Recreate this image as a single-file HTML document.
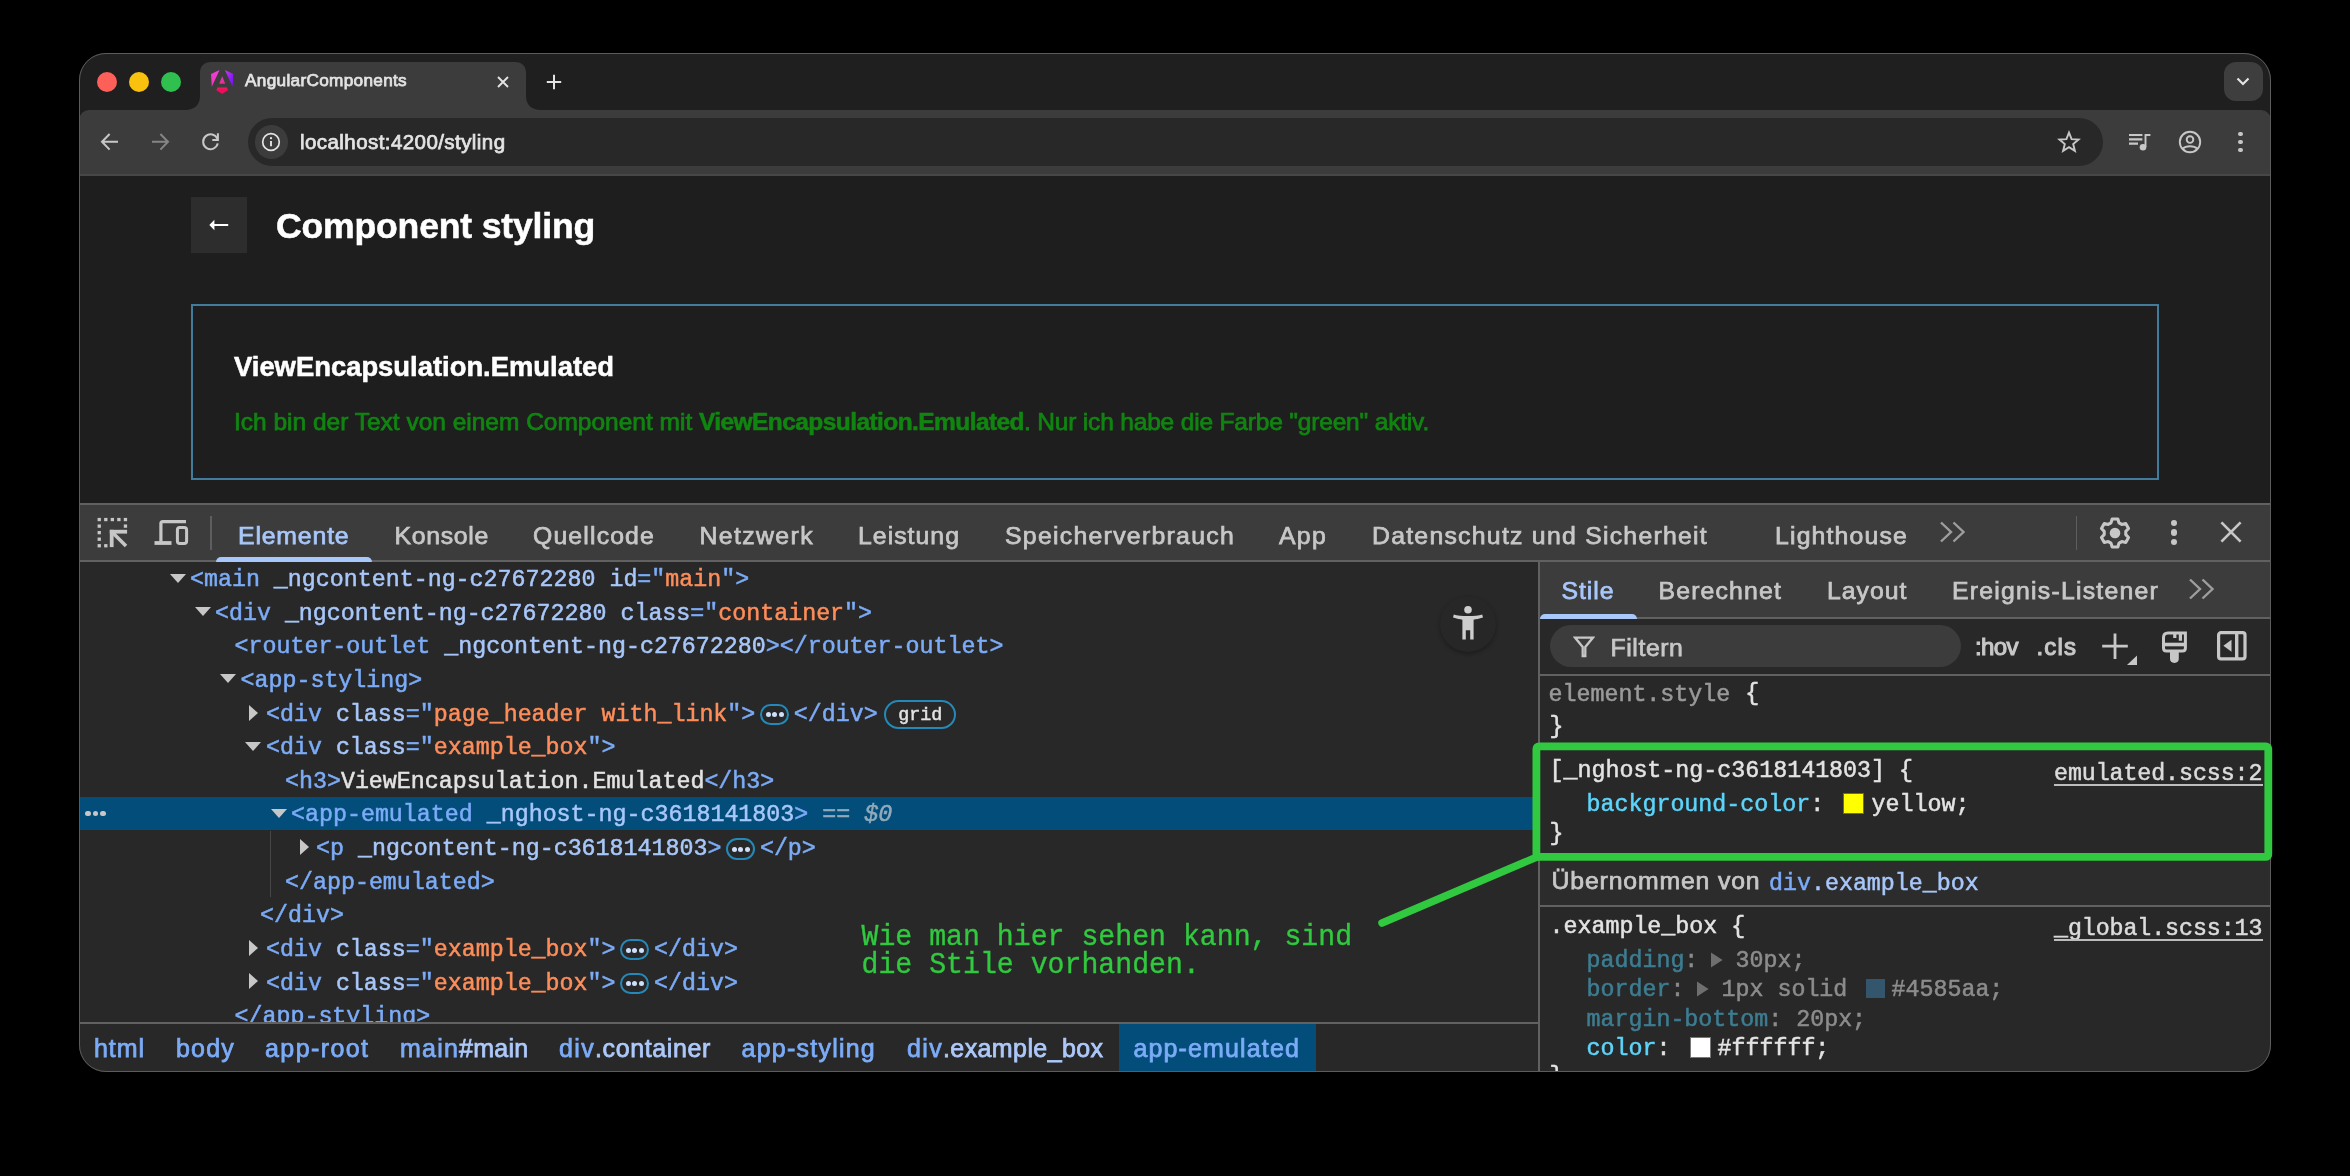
<!DOCTYPE html>
<html><head><meta charset="utf-8"><title>AngularComponents</title>
<style>
html,body{margin:0;padding:0;background:#000;}
body{width:2350px;height:1176px;overflow:hidden;position:relative;font-family:"Liberation Sans",sans-serif;}
#win{position:absolute;left:79px;top:53px;width:2192px;height:1019px;border-radius:27px;overflow:hidden;background:#1e1e1e;}
#c{position:absolute;left:-79px;top:-53px;width:2350px;height:1176px;will-change:transform;}
#c div,#c svg,#c span{position:absolute;}
.t{white-space:pre;line-height:1;}
.m{-webkit-text-stroke:0.5px currentColor;}
.u{-webkit-text-stroke:0.75px currentColor;}
.b{-webkit-text-stroke:0.55px currentColor;}
#rim{position:absolute;left:79px;top:53px;width:2190px;height:1017px;border-radius:27px;border:1px solid #5c5c5c;pointer-events:none;}
#ov{position:absolute;left:0;top:0;}
</style></head><body>
<div id="win"><div id="c">
<div style="left:79px;top:53px;width:2192px;height:57px;background:#1f1f1f;"></div>
<div style="left:79px;top:110px;width:2192px;height:64px;background:#3c3c3c;border-radius:10px 10px 0 0;"></div>
<div style="left:79px;top:174px;width:2192px;height:2px;background:#474747;"></div>
<div style="left:97px;top:72px;width:20px;height:20px;background:#fd5f59;border-radius:50%;"></div>
<div style="left:129.2px;top:72px;width:20px;height:20px;background:#f9c20f;border-radius:50%;"></div>
<div style="left:161.3px;top:72px;width:20px;height:20px;background:#2fc050;border-radius:50%;"></div>
<svg style="left:185px;top:62px" width="356" height="48" viewBox="0 0 356 48"><path d="M0 48 C9 48 15 43 15 34 L15 11 C15 4 19 0 26 0 L330 0 C337 0 341 4 341 11 L341 34 C341 43 347 48 356 48 Z" fill="#3c3c3c"/></svg>
<svg style="left:210.9px;top:69.8px" width="22.5" height="23.8" viewBox="0 0 223 236"><defs><linearGradient id="ag1" x1="0" y1="0" x2="0" y2="1"><stop offset="0" stop-color="#f838dc"/><stop offset="1" stop-color="#e43fb4"/></linearGradient><linearGradient id="ag2" x1="0" y1="0" x2="1" y2="1"><stop offset="0" stop-color="#c93cf0"/><stop offset=".6" stop-color="#8d1cf4"/><stop offset="1" stop-color="#6f12f6"/></linearGradient><linearGradient id="ag3" x1="0" y1="0" x2="0" y2="1"><stop offset="0" stop-color="#d440c4"/><stop offset="1" stop-color="#ea2c86"/></linearGradient><linearGradient id="ag4" x1="0" y1="0" x2="0" y2="1"><stop offset="0" stop-color="#e8206c"/><stop offset=".5" stop-color="#f60657"/><stop offset="1" stop-color="#ee1560"/></linearGradient></defs><path d="M7.937 165.115 0 39.192 84.69 0 7.937 165.115Z" fill="url(#ag1)"/><path d="m222.077 39.192-8.019 125.923L137.387 0l84.69 39.192Z" fill="url(#ag2)"/><path d="M111.039 62.675l30.357 73.803H80.681l30.358-73.803Z" fill="url(#ag3)"/><path d="M168.972 202.017l-57.933 33.056-57.934-33.056 11.783-28.556h92.301l11.783 28.556Z" fill="url(#ag4)"/></svg>
<span class="t u" style="left:245px;top:72.44px;font-size:17.2px;color:#e3e3e3;letter-spacing:0.312px;">AngularComponents</span>
<svg style="left:496.2px;top:74.5px" width="14" height="14" viewBox="0 0 14 14"><path d="M2 2 L12 12 M12 2 L2 12" stroke="#e3e3e3" stroke-width="1.9" fill="none"/></svg>
<svg style="left:546px;top:73.5px" width="16" height="16" viewBox="0 0 16 16"><path d="M8 0.8 V15.2 M0.8 8 H15.2" stroke="#e3e3e3" stroke-width="2" fill="none"/></svg>
<div style="left:2224px;top:62px;width:39px;height:39px;background:#3e3e3e;border-radius:12px;"></div>
<svg style="left:2236px;top:77.2px" width="14" height="10" viewBox="0 0 14 10"><path d="M1.5 1.5 L7 7 L12.5 1.5" stroke="#e3e3e3" stroke-width="2.2" fill="none"/></svg>
<svg style="left:99px;top:131px" width="22" height="22" viewBox="0 0 22 22"><path d="M19 10.8 H3.8 M10.6 3 L3 10.8 L10.6 18.6" stroke="#c7c7c7" stroke-width="2" fill="none"/></svg>
<svg style="left:149px;top:131px" width="22" height="22" viewBox="0 0 22 22"><path d="M3 10.8 H18.2 M11.4 3 L19 10.8 L11.4 18.6" stroke="#858585" stroke-width="2" fill="none"/></svg>
<svg style="left:200px;top:131px" width="22" height="22" viewBox="0 0 22 22"><path d="M17.4 8.0 A7.4 7.4 0 1 0 17.75 12.4" stroke="#c7c7c7" stroke-width="2" fill="none"/><path d="M17.9 2.2 V8.9 H12.3" stroke="#c7c7c7" stroke-width="2" fill="none"/></svg>
<div style="left:247.8px;top:118px;width:1854.8px;height:47.7px;background:#282828;border-radius:24px;"></div>
<div style="left:254.6px;top:125px;width:33.6px;height:33.6px;background:#3c3c3c;border-radius:50%;"></div>
<svg style="left:261.4px;top:131.8px" width="20" height="20" viewBox="0 0 20 20"><circle cx="10" cy="10" r="8.3" stroke="#e3e3e3" stroke-width="1.7" fill="none"/><path d="M10 9 V14.2" stroke="#e3e3e3" stroke-width="1.9"/><circle cx="10" cy="6.2" r="1.15" fill="#e3e3e3"/></svg>
<span class="t u" style="left:300px;top:131.65px;font-size:20.5px;color:#e3e3e3;letter-spacing:0.431px;">localhost:4200/styling</span>
<svg style="left:2057px;top:130px" width="24" height="24" viewBox="0 0 24 24"><path d="M12 2.6 L14.6 9.1 L21.6 9.6 L16.2 14.1 L17.9 20.9 L12 17.2 L6.1 20.9 L7.8 14.1 L2.4 9.6 L9.4 9.1 Z" stroke="#c7c7c7" stroke-width="1.9" fill="none" stroke-linejoin="miter"/></svg>
<svg style="left:2128px;top:131.5px" width="24" height="22" viewBox="0 0 24 22"><path d="M1 3 H14.4 M1 7.3 H14.4 M1 11.6 H10" stroke="#c7c7c7" stroke-width="2.2"/><path d="M16.6 3 H22.4 M17.5 3 V15" stroke="#c7c7c7" stroke-width="1.9" fill="none"/><circle cx="15" cy="15.2" r="3.3" fill="#c7c7c7"/></svg>
<svg style="left:2178px;top:130px" width="24" height="24" viewBox="0 0 24 24"><circle cx="12" cy="12" r="10.2" stroke="#c7c7c7" stroke-width="1.9" fill="none"/><circle cx="12" cy="9.6" r="3.3" stroke="#c7c7c7" stroke-width="1.9" fill="none"/><path d="M4.8 18.6 C8 15.4 16 15.4 19.2 18.6" stroke="#c7c7c7" stroke-width="1.9" fill="none"/></svg>
<div style="left:2238px;top:131.7px;width:4.6px;height:4.6px;background:#c7c7c7;border-radius:50%;"></div>
<div style="left:2238px;top:139.7px;width:4.6px;height:4.6px;background:#c7c7c7;border-radius:50%;"></div>
<div style="left:2238px;top:147.7px;width:4.6px;height:4.6px;background:#c7c7c7;border-radius:50%;"></div>
<div style="left:79px;top:176px;width:2192px;height:328px;background:#1e1e1e;"></div>
<div style="left:191px;top:197px;width:56px;height:56px;background:#2d2d2d;"></div>
<svg style="left:209px;top:219px" width="20" height="12" viewBox="0 0 20 12"><path d="M0.3 6 L5.4 0.8 L5.4 5 L19.2 5 L19.2 7 L5.4 7 L5.4 11.2 Z" fill="#ffffff"/></svg>
<span class="t b" style="left:276px;top:208.86px;font-size:35.6px;color:#ffffff;font-weight:700;letter-spacing:-0.187px;">Component styling</span>
<div style="left:191px;top:304px;width:1964px;height:172px;background:transparent;border:2px solid #427b9c;"></div>
<span class="t b" style="left:234px;top:352.81px;font-size:27.4px;color:#ffffff;font-weight:700;letter-spacing:-0.001px;">ViewEncapsulation.Emulated</span>
<span class="t u" style="left:234px;top:410.26px;font-size:24.5px;color:#108510;letter-spacing:-0.007px;">Ich bin der Text von einem Component mit </span>
<span class="t b" style="left:699px;top:410.26px;font-size:24.5px;color:#108510;font-weight:700;letter-spacing:-0.574px;">ViewEncapsulation.Emulated</span>
<span class="t u" style="left:1024px;top:410.26px;font-size:24.5px;color:#108510;letter-spacing:-0.176px;">. Nur ich habe die Farbe "green" aktiv.</span>
<div style="left:79px;top:503px;width:2192px;height:2px;background:#616161;"></div>
<div style="left:79px;top:505px;width:2192px;height:55px;background:#3c3c3c;"></div>
<div style="left:79px;top:560px;width:2192px;height:2px;background:#616161;"></div>
<div style="left:79px;top:562px;width:1459px;height:460px;background:#282828;"></div>
<svg style="left:97px;top:517px" width="32" height="32" viewBox="0 0 32 32"><g fill="#c7c7c7"><rect x="0.60" y="0.90" width="3.3" height="3.3"/><rect x="7.15" y="0.90" width="3.3" height="3.3"/><rect x="13.70" y="0.90" width="3.3" height="3.3"/><rect x="20.25" y="0.90" width="3.3" height="3.3"/><rect x="26.80" y="0.90" width="3.3" height="3.3"/><rect x="0.60" y="7.45" width="3.3" height="3.3"/><rect x="0.60" y="14.00" width="3.3" height="3.3"/><rect x="0.60" y="20.55" width="3.3" height="3.3"/><rect x="0.60" y="27.10" width="3.3" height="3.3"/><rect x="26.80" y="7.45" width="3.3" height="3.3"/><rect x="7.15" y="27.10" width="3.3" height="3.3"/><rect x="12.8" y="12.8" width="17.3" height="3.8"/><rect x="12.8" y="12.8" width="3.8" height="17.3"/></g><path d="M15 15 L29 29" stroke="#c7c7c7" stroke-width="3.5" fill="none"/></svg>
<svg style="left:154px;top:517px" width="36" height="30" viewBox="0 0 36 30"><path d="M6.9 24.6 V6.6 Q6.9 4.6 8.9 4.6 H32" stroke="#c7c7c7" stroke-width="3.2" fill="none"/><path d="M0.5 26 H17.5" stroke="#c7c7c7" stroke-width="3.8" fill="none"/><rect x="23.4" y="10.5" width="9.2" height="16" rx="2.4" stroke="#c7c7c7" stroke-width="3" fill="none"/></svg>
<div style="left:210px;top:516px;width:1.5px;height:34px;background:#5e5e5e;"></div>
<span class="t u" style="left:238px;top:523.81px;font-size:24.8px;color:#a8c7fa;letter-spacing:0.842px;">Elemente</span>
<div style="left:216px;top:557px;width:156px;height:5px;background:#a8c7fa;border-radius:5px 5px 0 0;"></div>
<span class="t u" style="left:394.5px;top:523.81px;font-size:24.8px;color:#c7c7c7;letter-spacing:0.696px;">Konsole</span>
<span class="t u" style="left:533px;top:523.81px;font-size:24.8px;color:#c7c7c7;letter-spacing:1.148px;">Quellcode</span>
<span class="t u" style="left:699.5px;top:523.81px;font-size:24.8px;color:#c7c7c7;letter-spacing:1.395px;">Netzwerk</span>
<span class="t u" style="left:858px;top:523.81px;font-size:24.8px;color:#c7c7c7;letter-spacing:1.029px;">Leistung</span>
<span class="t u" style="left:1005px;top:523.81px;font-size:24.8px;color:#c7c7c7;letter-spacing:1.286px;">Speicherverbrauch</span>
<span class="t u" style="left:1279px;top:523.81px;font-size:24.8px;color:#c7c7c7;letter-spacing:1.292px;">App</span>
<span class="t u" style="left:1372px;top:523.81px;font-size:24.8px;color:#c7c7c7;letter-spacing:1.259px;">Datenschutz und Sicherheit</span>
<span class="t u" style="left:1775px;top:523.81px;font-size:24.8px;color:#c7c7c7;letter-spacing:1.166px;">Lighthouse</span>
<svg style="left:1939px;top:521px" width="28" height="22" viewBox="0 0 28 22"><path d="M2 1.5 L12 11 L2 20.5 M14.5 1.5 L24.5 11 L14.5 20.5" stroke="#9e9e9e" stroke-width="2.4" fill="none"/></svg>
<div style="left:2075.5px;top:516px;width:1.5px;height:34px;background:#5e5e5e;"></div>
<svg style="left:2098.2px;top:515.5px" width="34" height="34" viewBox="0 0 34 34"><path d="M14.17 2.98 L19.83 2.98 L21.01 6.87 L23.77 8.46 L27.73 7.54 L30.55 12.44 L27.78 15.41 L27.78 18.59 L30.55 21.56 L27.73 26.46 L23.77 25.54 L21.01 27.13 L19.83 31.02 L14.17 31.02 L12.99 27.13 L10.23 25.54 L6.27 26.46 L3.45 21.56 L6.22 18.59 L6.22 15.41 L3.45 12.44 L6.27 7.54 L10.23 8.46 L12.99 6.87 Z" stroke="#c7c7c7" stroke-width="3.1" fill="none" stroke-linejoin="round"/><circle cx="17" cy="17" r="5.3" fill="#c7c7c7"/></svg>
<div style="left:2171.1px;top:520.1px;width:6.2px;height:6.2px;background:#c7c7c7;border-radius:50%;"></div>
<div style="left:2171.1px;top:529.4px;width:6.2px;height:6.2px;background:#c7c7c7;border-radius:50%;"></div>
<div style="left:2171.1px;top:538.9px;width:6.2px;height:6.2px;background:#c7c7c7;border-radius:50%;"></div>
<svg style="left:2219.2px;top:520.4px" width="24" height="24" viewBox="0 0 24 24"><path d="M2.4 2.4 L21.6 21.6 M21.6 2.4 L2.4 21.6" stroke="#c7c7c7" stroke-width="2.7" fill="none"/></svg>
<div style="left:79px;top:796.7px;width:1459px;height:33.3px;background:#034d7a;"></div>
<svg style="left:170px;top:573.5px" width="16" height="9" viewBox="0 0 16 9"><path d="M0 0 H16 L8 9 Z" fill="#c7c7c7"/></svg>
<span class="t m" style="left:190px;top:569.13px;font-size:23.3px;color:#7cacf8;font-family:'Liberation Mono',monospace;">&lt;main</span>
<span class="t m" style="left:259.9px;top:569.13px;font-size:23.3px;color:#a8c7fa;font-family:'Liberation Mono',monospace;"> _ngcontent-ng-c27672280 id</span>
<span class="t m" style="left:637.36px;top:569.13px;font-size:23.3px;color:#7cacf8;font-family:'Liberation Mono',monospace;">="</span>
<span class="t m" style="left:665.32px;top:569.13px;font-size:23.3px;color:#fe8d59;font-family:'Liberation Mono',monospace;">main</span>
<span class="t m" style="left:721.24px;top:569.13px;font-size:23.3px;color:#7cacf8;font-family:'Liberation Mono',monospace;">"&gt;</span>
<svg style="left:195px;top:607.1px" width="16" height="9" viewBox="0 0 16 9"><path d="M0 0 H16 L8 9 Z" fill="#c7c7c7"/></svg>
<span class="t m" style="left:215px;top:602.75px;font-size:23.3px;color:#7cacf8;font-family:'Liberation Mono',monospace;">&lt;div</span>
<span class="t m" style="left:270.92px;top:602.75px;font-size:23.3px;color:#a8c7fa;font-family:'Liberation Mono',monospace;"> _ngcontent-ng-c27672280 class</span>
<span class="t m" style="left:690.32px;top:602.75px;font-size:23.3px;color:#7cacf8;font-family:'Liberation Mono',monospace;">="</span>
<span class="t m" style="left:718.2800000000001px;top:602.75px;font-size:23.3px;color:#fe8d59;font-family:'Liberation Mono',monospace;">container</span>
<span class="t m" style="left:844.1000000000001px;top:602.75px;font-size:23.3px;color:#7cacf8;font-family:'Liberation Mono',monospace;">"&gt;</span>
<span class="t m" style="left:234.5px;top:636.37px;font-size:23.3px;color:#7cacf8;font-family:'Liberation Mono',monospace;">&lt;router-outlet</span>
<span class="t m" style="left:430.22px;top:636.37px;font-size:23.3px;color:#a8c7fa;font-family:'Liberation Mono',monospace;"> _ngcontent-ng-c27672280</span>
<span class="t m" style="left:765.74px;top:636.37px;font-size:23.3px;color:#7cacf8;font-family:'Liberation Mono',monospace;">&gt;&lt;/router-outlet&gt;</span>
<svg style="left:220px;top:674.4px" width="16" height="9" viewBox="0 0 16 9"><path d="M0 0 H16 L8 9 Z" fill="#c7c7c7"/></svg>
<span class="t m" style="left:240.5px;top:669.99px;font-size:23.3px;color:#7cacf8;font-family:'Liberation Mono',monospace;">&lt;app-styling&gt;</span>
<svg style="left:248.5px;top:704.5px" width="9" height="16" viewBox="0 0 9 16"><path d="M0 0 V16 L9 8 Z" fill="#c7c7c7"/></svg>
<span class="t m" style="left:266px;top:703.61px;font-size:23.3px;color:#7cacf8;font-family:'Liberation Mono',monospace;">&lt;div</span>
<span class="t m" style="left:321.92px;top:703.61px;font-size:23.3px;color:#a8c7fa;font-family:'Liberation Mono',monospace;"> class</span>
<span class="t m" style="left:405.8px;top:703.61px;font-size:23.3px;color:#7cacf8;font-family:'Liberation Mono',monospace;">="</span>
<span class="t m" style="left:433.76px;top:703.61px;font-size:23.3px;color:#fe8d59;font-family:'Liberation Mono',monospace;">page_header with_link</span>
<span class="t m" style="left:727.3399999999999px;top:703.61px;font-size:23.3px;color:#7cacf8;font-family:'Liberation Mono',monospace;">"&gt;</span>
<div style="left:759.8px;top:703.9px;width:25.2px;height:17.2px;border:2.2px solid #2489b8;border-radius:11px;"></div>
<div style="left:765.5px;top:712.2px;width:5px;height:5px;border-radius:50%;background:#cfe0fb;"></div>
<div style="left:772.1px;top:712.2px;width:5px;height:5px;border-radius:50%;background:#cfe0fb;"></div>
<div style="left:778.7px;top:712.2px;width:5px;height:5px;border-radius:50%;background:#cfe0fb;"></div>
<span class="t m" style="left:793.8px;top:703.61px;font-size:23.3px;color:#7cacf8;font-family:'Liberation Mono',monospace;">&lt;/div&gt;</span>
<div style="left:884.18px;top:699.6px;width:68.1px;height:25.2px;border:2.2px solid #2489b8;border-radius:15px;"></div>
<span class="t m" style="left:898.18px;top:707.37px;font-size:18.4px;color:#e3e3e3;font-family:'Liberation Mono',monospace;">grid</span>
<svg style="left:245px;top:741.6px" width="16" height="9" viewBox="0 0 16 9"><path d="M0 0 H16 L8 9 Z" fill="#c7c7c7"/></svg>
<span class="t m" style="left:266px;top:737.23px;font-size:23.3px;color:#7cacf8;font-family:'Liberation Mono',monospace;">&lt;div</span>
<span class="t m" style="left:321.92px;top:737.23px;font-size:23.3px;color:#a8c7fa;font-family:'Liberation Mono',monospace;"> class</span>
<span class="t m" style="left:405.8px;top:737.23px;font-size:23.3px;color:#7cacf8;font-family:'Liberation Mono',monospace;">="</span>
<span class="t m" style="left:433.76px;top:737.23px;font-size:23.3px;color:#fe8d59;font-family:'Liberation Mono',monospace;">example_box</span>
<span class="t m" style="left:587.54px;top:737.23px;font-size:23.3px;color:#7cacf8;font-family:'Liberation Mono',monospace;">"&gt;</span>
<span class="t m" style="left:285px;top:770.85px;font-size:23.3px;color:#7cacf8;font-family:'Liberation Mono',monospace;">&lt;h3&gt;</span>
<span class="t m" style="left:340.92px;top:770.85px;font-size:23.3px;color:#e3e3e3;font-family:'Liberation Mono',monospace;">ViewEncapsulation.Emulated</span>
<span class="t m" style="left:704.4000000000001px;top:770.85px;font-size:23.3px;color:#7cacf8;font-family:'Liberation Mono',monospace;">&lt;/h3&gt;</span>
<div style="left:85.4px;top:810.7px;width:5.6px;height:5.6px;background:#c7c7c7;border-radius:50%;"></div>
<div style="left:92.80000000000001px;top:810.7px;width:5.6px;height:5.6px;background:#c7c7c7;border-radius:50%;"></div>
<div style="left:100.2px;top:810.7px;width:5.6px;height:5.6px;background:#c7c7c7;border-radius:50%;"></div>
<svg style="left:271px;top:808.8px" width="16" height="9" viewBox="0 0 16 9"><path d="M0 0 H16 L8 9 Z" fill="#c7c7c7"/></svg>
<span class="t m" style="left:291px;top:804.47px;font-size:23.3px;color:#7cacf8;font-family:'Liberation Mono',monospace;">&lt;app-emulated</span>
<span class="t m" style="left:472.74px;top:804.47px;font-size:23.3px;color:#a8c7fa;font-family:'Liberation Mono',monospace;"> _nghost-ng-c3618141803</span>
<span class="t m" style="left:794.28px;top:804.47px;font-size:23.3px;color:#7cacf8;font-family:'Liberation Mono',monospace;">&gt;</span>
<span class="t m" style="left:822.26px;top:804.47px;font-size:23.3px;color:#90aabc;font-family:'Liberation Mono',monospace;">==</span>
<span class="t m" style="left:864.2px;top:804.47px;font-size:23.3px;color:#90aabc;font-family:'Liberation Mono',monospace;font-style:italic;">$0</span>
<div style="left:269.6px;top:831px;width:1.5px;height:66px;background:#464646;"></div>
<svg style="left:299.5px;top:839.0px" width="9" height="16" viewBox="0 0 9 16"><path d="M0 0 V16 L9 8 Z" fill="#c7c7c7"/></svg>
<span class="t m" style="left:316px;top:838.09px;font-size:23.3px;color:#7cacf8;font-family:'Liberation Mono',monospace;">&lt;p</span>
<span class="t m" style="left:343.96px;top:838.09px;font-size:23.3px;color:#a8c7fa;font-family:'Liberation Mono',monospace;"> _ngcontent-ng-c3618141803</span>
<span class="t m" style="left:707.44px;top:838.09px;font-size:23.3px;color:#7cacf8;font-family:'Liberation Mono',monospace;">&gt;</span>
<div style="left:725.9200000000001px;top:838.4px;width:25.2px;height:17.2px;border:2.2px solid #2489b8;border-radius:11px;"></div>
<div style="left:731.6px;top:846.7px;width:5px;height:5px;border-radius:50%;background:#cfe0fb;"></div>
<div style="left:738.2px;top:846.7px;width:5px;height:5px;border-radius:50%;background:#cfe0fb;"></div>
<div style="left:744.8px;top:846.7px;width:5px;height:5px;border-radius:50%;background:#cfe0fb;"></div>
<span class="t m" style="left:759.9200000000001px;top:838.09px;font-size:23.3px;color:#7cacf8;font-family:'Liberation Mono',monospace;">&lt;/p&gt;</span>
<span class="t m" style="left:285px;top:871.71px;font-size:23.3px;color:#7cacf8;font-family:'Liberation Mono',monospace;">&lt;/app-emulated&gt;</span>
<span class="t m" style="left:260px;top:905.33px;font-size:23.3px;color:#7cacf8;font-family:'Liberation Mono',monospace;">&lt;/div&gt;</span>
<svg style="left:248.5px;top:939.8px" width="9" height="16" viewBox="0 0 9 16"><path d="M0 0 V16 L9 8 Z" fill="#c7c7c7"/></svg>
<span class="t m" style="left:266px;top:938.95px;font-size:23.3px;color:#7cacf8;font-family:'Liberation Mono',monospace;">&lt;div</span>
<span class="t m" style="left:321.92px;top:938.95px;font-size:23.3px;color:#a8c7fa;font-family:'Liberation Mono',monospace;"> class</span>
<span class="t m" style="left:405.8px;top:938.95px;font-size:23.3px;color:#7cacf8;font-family:'Liberation Mono',monospace;">="</span>
<span class="t m" style="left:433.76px;top:938.95px;font-size:23.3px;color:#fe8d59;font-family:'Liberation Mono',monospace;">example_box</span>
<span class="t m" style="left:587.54px;top:938.95px;font-size:23.3px;color:#7cacf8;font-family:'Liberation Mono',monospace;">"&gt;</span>
<div style="left:620.0px;top:939.2px;width:25.2px;height:17.2px;border:2.2px solid #2489b8;border-radius:11px;"></div>
<div style="left:625.7px;top:947.5px;width:5px;height:5px;border-radius:50%;background:#cfe0fb;"></div>
<div style="left:632.3px;top:947.5px;width:5px;height:5px;border-radius:50%;background:#cfe0fb;"></div>
<div style="left:638.9px;top:947.5px;width:5px;height:5px;border-radius:50%;background:#cfe0fb;"></div>
<span class="t m" style="left:654.0px;top:938.95px;font-size:23.3px;color:#7cacf8;font-family:'Liberation Mono',monospace;">&lt;/div&gt;</span>
<svg style="left:248.5px;top:973.4px" width="9" height="16" viewBox="0 0 9 16"><path d="M0 0 V16 L9 8 Z" fill="#c7c7c7"/></svg>
<span class="t m" style="left:266px;top:972.57px;font-size:23.3px;color:#7cacf8;font-family:'Liberation Mono',monospace;">&lt;div</span>
<span class="t m" style="left:321.92px;top:972.57px;font-size:23.3px;color:#a8c7fa;font-family:'Liberation Mono',monospace;"> class</span>
<span class="t m" style="left:405.8px;top:972.57px;font-size:23.3px;color:#7cacf8;font-family:'Liberation Mono',monospace;">="</span>
<span class="t m" style="left:433.76px;top:972.57px;font-size:23.3px;color:#fe8d59;font-family:'Liberation Mono',monospace;">example_box</span>
<span class="t m" style="left:587.54px;top:972.57px;font-size:23.3px;color:#7cacf8;font-family:'Liberation Mono',monospace;">"&gt;</span>
<div style="left:620.0px;top:972.8px;width:25.2px;height:17.2px;border:2.2px solid #2489b8;border-radius:11px;"></div>
<div style="left:625.7px;top:981.1px;width:5px;height:5px;border-radius:50%;background:#cfe0fb;"></div>
<div style="left:632.3px;top:981.1px;width:5px;height:5px;border-radius:50%;background:#cfe0fb;"></div>
<div style="left:638.9px;top:981.1px;width:5px;height:5px;border-radius:50%;background:#cfe0fb;"></div>
<span class="t m" style="left:654.0px;top:972.57px;font-size:23.3px;color:#7cacf8;font-family:'Liberation Mono',monospace;">&lt;/div&gt;</span>
<span class="t m" style="left:234.5px;top:1006.19px;font-size:23.3px;color:#7cacf8;font-family:'Liberation Mono',monospace;">&lt;/app-styling&gt;</span>
<div style="left:1440px;top:596px;width:56px;height:56px;background:#272727;border-radius:50%;box-shadow:0 2px 4px rgba(0,0,0,.3);"></div>
<svg style="left:1452px;top:605px" width="32" height="36" viewBox="0 0 32 36"><circle cx="16" cy="4.8" r="3.8" fill="#cdcdcd"/><path d="M1.8 9.4 C8 11.6 24 11.6 30.2 9.4 L31 12.6 C27 13.8 24 14.4 21.6 14.8 V34.4 H18.2 V25.2 H13.8 V34.4 H10.4 V14.8 C8 14.4 5 13.8 1 12.6 Z" fill="#cdcdcd"/></svg>
<div style="left:79px;top:1021.5px;width:1459px;height:2px;background:#616161;"></div>
<div style="left:79px;top:1023.5px;width:1459px;height:49px;background:#282828;"></div>
<div style="left:1118.6px;top:1023.5px;width:197px;height:49px;background:#034d7a;"></div>
<span class="t u" style="left:94px;top:1035.84px;font-size:25px;color:#7cacf8;letter-spacing:0.941px;">html</span>
<span class="t u" style="left:176px;top:1035.84px;font-size:25px;color:#7cacf8;letter-spacing:1.195px;">body</span>
<span class="t u" style="left:265px;top:1035.84px;font-size:25px;color:#7cacf8;letter-spacing:1.422px;">app-root</span>
<span class="t u" style="left:400px;top:1035.84px;font-size:25px;color:#7cacf8;letter-spacing:1.203px;">main</span>
<span class="t u" style="left:459px;top:1035.84px;font-size:25px;color:#adc9fa;letter-spacing:0.281px;">#main</span>
<span class="t u" style="left:559px;top:1035.84px;font-size:25px;color:#7cacf8;letter-spacing:1.344px;">div</span>
<span class="t u" style="left:595px;top:1035.84px;font-size:25px;color:#adc9fa;letter-spacing:0.620px;">.container</span>
<span class="t u" style="left:741.5px;top:1035.84px;font-size:25px;color:#7cacf8;letter-spacing:1.236px;">app-styling</span>
<span class="t u" style="left:907px;top:1035.84px;font-size:25px;color:#7cacf8;letter-spacing:1.344px;">div</span>
<span class="t u" style="left:943px;top:1035.84px;font-size:25px;color:#adc9fa;letter-spacing:0.404px;">.example_box</span>
<span class="t u" style="left:1133.5px;top:1035.84px;font-size:25px;color:#7cacf8;letter-spacing:1.134px;">app-emulated</span>
<div style="left:1537.7px;top:562px;width:2.4px;height:510px;background:#616161;"></div>
<div style="left:1540px;top:562px;width:731px;height:55px;background:#3c3c3c;"></div>
<div style="left:1540px;top:617px;width:731px;height:2px;background:#616161;"></div>
<div style="left:1540px;top:619px;width:731px;height:453px;background:#282828;"></div>
<span class="t u" style="left:1561.5px;top:579.41px;font-size:24.8px;color:#a8c7fa;letter-spacing:0.950px;">Stile</span>
<div style="left:1540px;top:614.2px;width:97px;height:4.6px;background:#a8c7fa;border-radius:5px 5px 0 0;"></div>
<span class="t u" style="left:1658.5px;top:579.41px;font-size:24.8px;color:#c7c7c7;letter-spacing:1.161px;">Berechnet</span>
<span class="t u" style="left:1827px;top:579.41px;font-size:24.8px;color:#c7c7c7;letter-spacing:1.008px;">Layout</span>
<span class="t u" style="left:1952px;top:579.41px;font-size:24.8px;color:#c7c7c7;letter-spacing:1.232px;">Ereignis-Listener</span>
<svg style="left:2188px;top:578px" width="28" height="22" viewBox="0 0 28 22"><path d="M2 1.5 L12 11 L2 20.5 M14.5 1.5 L24.5 11 L14.5 20.5" stroke="#9e9e9e" stroke-width="2.4" fill="none"/></svg>
<div style="left:1550.2px;top:625.2px;width:411.3px;height:42.1px;background:#3c3c3c;border-radius:22px;"></div>
<svg style="left:1573px;top:636px" width="22" height="22" viewBox="0 0 22 22"><path d="M2 1.6 H20 L12.3 11 V20 H9.7 V11 Z" stroke="#c7c7c7" stroke-width="2.3" fill="none" stroke-linejoin="miter"/></svg>
<span class="t u" style="left:1610.5px;top:635.61px;font-size:24.8px;color:#c7c7c7;letter-spacing:0.585px;">Filtern</span>
<span class="t u" style="left:1975px;top:634.88px;font-size:24px;color:#c7c7c7;letter-spacing:-0.594px;-webkit-text-stroke:1.1px currentColor;">:hov</span>
<span class="t u" style="left:2036.5px;top:634.88px;font-size:24px;color:#c7c7c7;letter-spacing:1.125px;-webkit-text-stroke:1.1px currentColor;">.cls</span>
<svg style="left:2101px;top:632px" width="38" height="36" viewBox="0 0 38 36"><path d="M14 1.5 V27 M1.2 14.2 H26.8" stroke="#c7c7c7" stroke-width="2.8" fill="none"/><path d="M36 23.5 V33 H26 Z" fill="#c7c7c7"/></svg>
<svg style="left:2160px;top:630px" width="28" height="34" viewBox="0 0 28 34"><path d="M25.4 3 H8 Q3.5 3 3.5 7.5 V18 Q3.5 21 6.5 21 H22.4 Q25.4 21 25.4 18 Z" stroke="#c7c7c7" stroke-width="3" fill="none"/><path d="M3.5 14.5 H25.4" stroke="#c7c7c7" stroke-width="3.6"/><path d="M14.8 3 V8 M20.4 3 V10.7" stroke="#c7c7c7" stroke-width="3.2"/><path d="M10 21 H18.8 V28.6 Q18.8 32.9 14.4 32.9 Q10 32.9 10 28.6 Z" fill="#c7c7c7"/></svg>
<svg style="left:2215.7px;top:630.4px" width="32" height="32" viewBox="0 0 32 32"><rect x="2.6" y="2.7" width="26.4" height="26.2" rx="2.4" stroke="#c7c7c7" stroke-width="3.2" fill="none"/><path d="M20.7 3 V29" stroke="#c7c7c7" stroke-width="3.4"/><path d="M15.5 9.8 V21.8 L7.4 15.8 Z" fill="#c7c7c7"/></svg>
<div style="left:1540px;top:674px;width:731px;height:2px;background:#616161;"></div>
<span class="t m" style="left:1548.5px;top:684.43px;font-size:23.3px;color:#9a9a9a;font-family:'Liberation Mono',monospace;">element.style </span>
<span class="t m" style="left:1745.22px;top:683.43px;font-size:23.3px;color:#e3e3e3;font-family:'Liberation Mono',monospace;">{</span>
<span class="t m" style="left:1549.5px;top:715.93px;font-size:23.3px;color:#e3e3e3;font-family:'Liberation Mono',monospace;">}</span>
<span class="t m" style="left:1549.5px;top:760.43px;font-size:23.3px;color:#e3e3e3;font-family:'Liberation Mono',monospace;">[_nghost-ng-c3618141803] {</span>
<span class="t m" style="left:2054px;top:763.43px;font-size:23.3px;color:#dcdcdc;font-family:'Liberation Mono',monospace;letter-spacing:-0.09px;">emulated.scss:2</span>
<div style="left:2054px;top:784px;width:209px;height:1.6px;background:#bdbdbd;"></div>
<span class="t m" style="left:1586.5px;top:794.43px;font-size:23.3px;color:#5cd5fb;font-family:'Liberation Mono',monospace;">background-color</span>
<span class="t m" style="left:1810.18px;top:794.43px;font-size:23.3px;color:#e3e3e3;font-family:'Liberation Mono',monospace;">:</span>
<div style="left:1844px;top:794px;width:19px;height:19px;background:#ffff00;box-shadow:0 0 0 1px #6b6b3a;"></div>
<span class="t m" style="left:1871.5px;top:794.43px;font-size:23.3px;color:#e3e3e3;font-family:'Liberation Mono',monospace;">yellow;</span>
<span class="t m" style="left:1549.5px;top:822.93px;font-size:23.3px;color:#e3e3e3;font-family:'Liberation Mono',monospace;">}</span>
<div style="left:1540px;top:861px;width:731px;height:44px;background:#2c2c2c;"></div>
<div style="left:1540px;top:905px;width:731px;height:2px;background:#616161;"></div>
<span class="t u" style="left:1551.5px;top:869.01px;font-size:24.8px;color:#c7c7c7;letter-spacing:0.850px;">Übernommen von</span>
<span class="t m" style="left:1769px;top:872.73px;font-size:23.3px;color:#7cacf8;font-family:'Liberation Mono',monospace;">div</span>
<span class="t m" style="left:1810.94px;top:872.73px;font-size:23.3px;color:#a8c7fa;font-family:'Liberation Mono',monospace;">.example_box</span>
<span class="t m" style="left:1549.5px;top:915.73px;font-size:23.3px;color:#e3e3e3;font-family:'Liberation Mono',monospace;">.example_box {</span>
<span class="t m" style="left:2054px;top:918.43px;font-size:23.3px;color:#dcdcdc;font-family:'Liberation Mono',monospace;letter-spacing:-0.09px;">_global.scss:13</span>
<div style="left:2054px;top:939px;width:209px;height:1.6px;background:#bdbdbd;"></div>
<span class="t m" style="left:1586.5px;top:949.73px;font-size:23.3px;color:#3d7d92;font-family:'Liberation Mono',monospace;">padding</span>
<span class="t m" style="left:1684.36px;top:949.73px;font-size:23.3px;color:#8c8c8c;font-family:'Liberation Mono',monospace;">:</span>
<svg style="left:1711px;top:952px" width="12" height="16" viewBox="0 0 12 16"><path d="M0 0.5 V15.5 L11.6 8 Z" fill="#6f6f6f"/></svg>
<span class="t m" style="left:1735.5px;top:949.73px;font-size:23.3px;color:#8c8c8c;font-family:'Liberation Mono',monospace;">30px;</span>
<span class="t m" style="left:1586.5px;top:978.93px;font-size:23.3px;color:#3d7d92;font-family:'Liberation Mono',monospace;">border</span>
<span class="t m" style="left:1670.38px;top:978.93px;font-size:23.3px;color:#8c8c8c;font-family:'Liberation Mono',monospace;">:</span>
<svg style="left:1697px;top:981px" width="12" height="16" viewBox="0 0 12 16"><path d="M0 0.5 V15.5 L11.6 8 Z" fill="#6f6f6f"/></svg>
<span class="t m" style="left:1721.5px;top:978.93px;font-size:23.3px;color:#8c8c8c;font-family:'Liberation Mono',monospace;">1px solid</span>
<div style="left:1865.5px;top:978.5px;width:19.5px;height:19.5px;background:#34566c;"></div>
<span class="t m" style="left:1891.5px;top:978.93px;font-size:23.3px;color:#8c8c8c;font-family:'Liberation Mono',monospace;">#4585aa;</span>
<span class="t m" style="left:1586.5px;top:1008.73px;font-size:23.3px;color:#3d7d92;font-family:'Liberation Mono',monospace;">margin-bottom</span>
<span class="t m" style="left:1768.24px;top:1008.73px;font-size:23.3px;color:#8c8c8c;font-family:'Liberation Mono',monospace;">: 20px;</span>
<span class="t m" style="left:1586.5px;top:1037.93px;font-size:23.3px;color:#5cd5fb;font-family:'Liberation Mono',monospace;">color</span>
<span class="t m" style="left:1656.4px;top:1037.93px;font-size:23.3px;color:#e3e3e3;font-family:'Liberation Mono',monospace;">:</span>
<div style="left:1690.5px;top:1037.5px;width:19px;height:19px;background:#ffffff;box-shadow:0 0 0 1px #777;"></div>
<span class="t m" style="left:1717.5px;top:1037.93px;font-size:23.3px;color:#e3e3e3;font-family:'Liberation Mono',monospace;">#ffffff;</span>
<span class="t m" style="left:1549.5px;top:1066.43px;font-size:23.3px;color:#e3e3e3;font-family:'Liberation Mono',monospace;">}</span>
<span class="t m" style="left:861.5px;top:923.88px;font-size:28.2px;color:#31c93f;font-family:'Liberation Mono',monospace;transform:scaleY(1.065);transform-origin:0 21.6px;-webkit-text-stroke:0.35px currentColor;">Wie man hier sehen kann, sind</span>
<span class="t m" style="left:861.5px;top:951.78px;font-size:28.2px;color:#31c93f;font-family:'Liberation Mono',monospace;transform:scaleY(1.065);transform-origin:0 21.6px;-webkit-text-stroke:0.35px currentColor;">die Stile vorhanden.</span>
</div></div>
<div id="rim"></div>
<svg id="ov" width="2350" height="1176" viewBox="0 0 2350 1176"><path d="M1382 923 L1537 857" stroke="#31c93f" stroke-width="7.5" stroke-linecap="round" fill="none"/><rect x="1536.4" y="746.3" width="731.9" height="110.6" rx="2.5" stroke="#31c93f" stroke-width="7.8" fill="none"/></svg>
</body></html>
